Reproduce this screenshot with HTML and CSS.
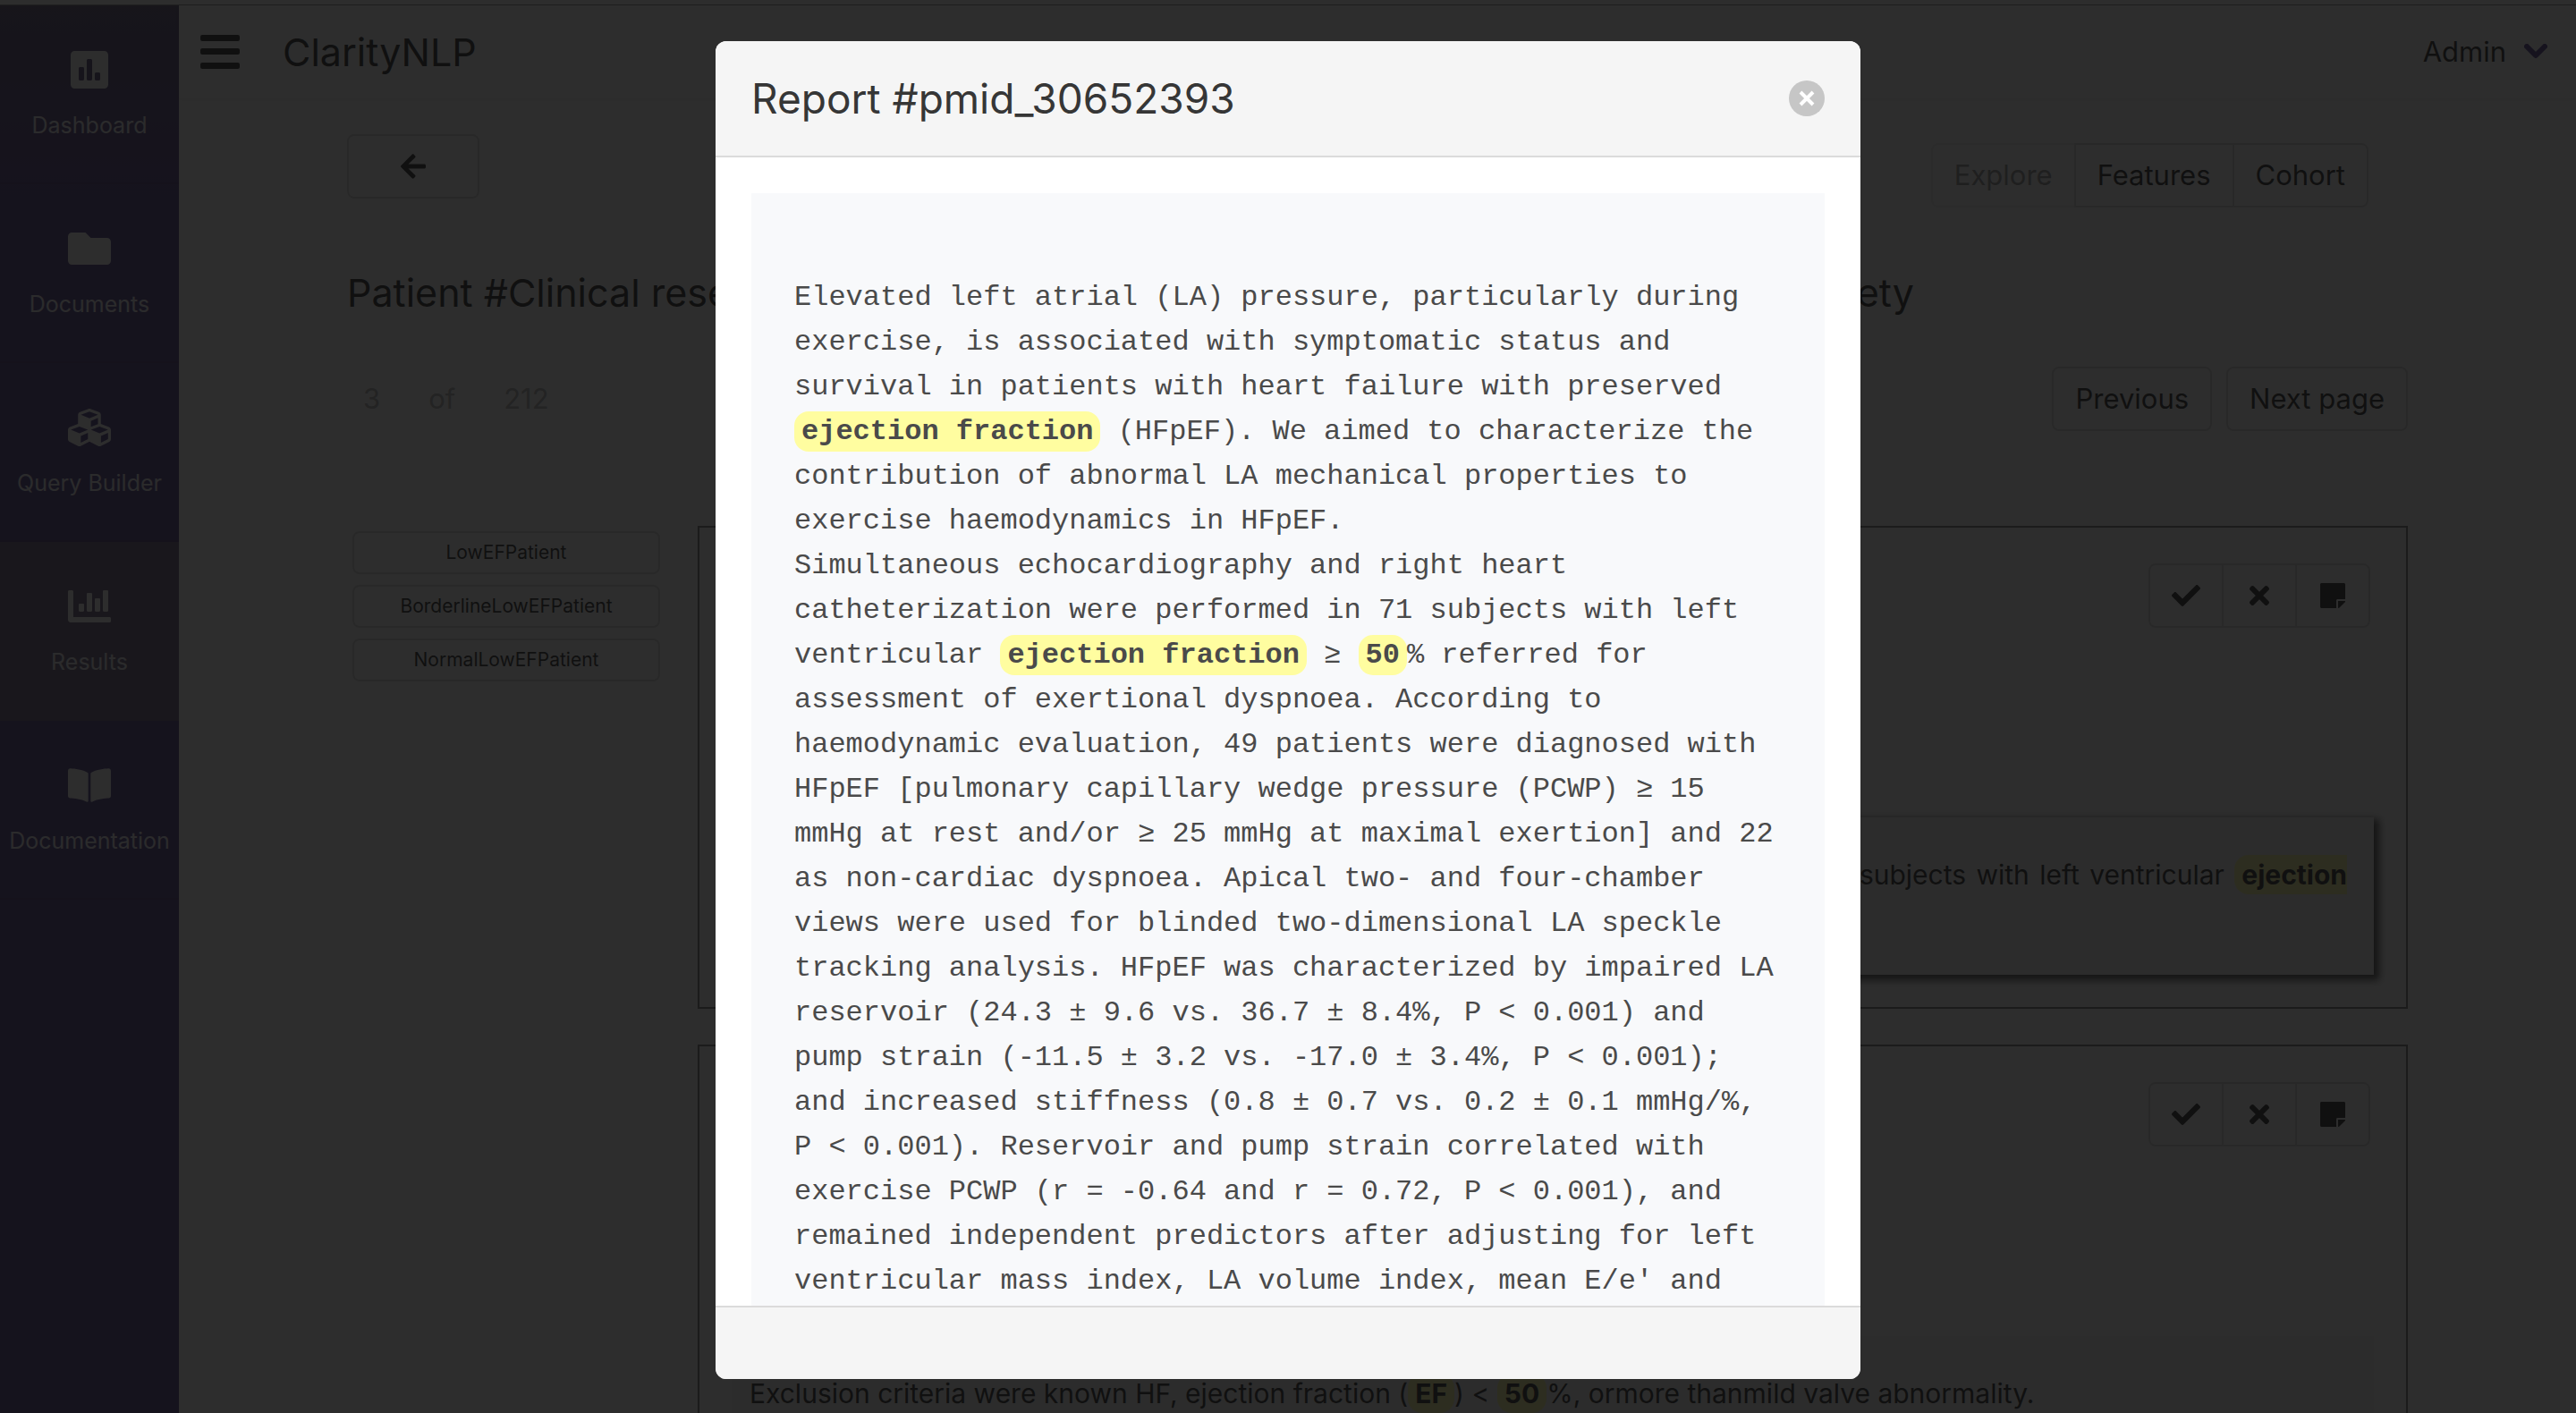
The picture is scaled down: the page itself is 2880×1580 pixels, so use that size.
FILE: index.html
```html
<!DOCTYPE html>
<html lang="en">
<head>
<meta charset="utf-8">
<title>ClarityNLP</title>
<link rel="stylesheet" href="styles.css">
</head>
<body>
<svg class="sprite" aria-hidden="true">
  <symbol id="i-check" viewBox="0 0 512 512"><path d="M173.898 439.404l-166.4-166.4c-9.997-9.997-9.997-26.206 0-36.204l36.203-36.204c9.997-9.998 26.207-9.998 36.204 0L192 312.69 432.095 72.596c9.997-9.997 26.207-9.997 36.204 0l36.203 36.204c9.997 9.997 9.997 26.206 0 36.204l-294.4 294.401c-9.998 9.997-26.207 9.997-36.204-.001z"/></symbol>
  <symbol id="i-times" viewBox="0 0 352 512"><path d="M242.72 256l100.07-100.07c12.28-12.28 12.28-32.19 0-44.48l-22.24-22.24c-12.28-12.28-32.19-12.28-44.48 0L176 189.28 75.93 89.21c-12.28-12.28-32.19-12.28-44.48 0L9.21 111.45c-12.28 12.28-12.28 32.19 0 44.48L109.28 256 9.21 356.07c-12.28 12.28-12.28 32.19 0 44.48l22.24 22.24c12.28 12.28 32.2 12.28 44.48 0L176 322.72l100.07 100.07c12.28 12.28 32.2 12.28 44.48 0l22.24-22.24c12.28-12.28 12.28-32.19 0-44.48L242.72 256z"/></symbol>
  <symbol id="i-note" viewBox="0 0 448 512"><path d="M312 320h136V56c0-13.3-10.7-24-24-24H24C10.7 32 0 42.7 0 56v400c0 13.3 10.7 24 24 24h264V344c0-13.2 10.8-24 24-24zm129 55l-98 98c-4.5 4.5-10.6 7-17 7h-6V352h128v6.1c0 6.3-2.5 12.4-7 16.9z"/></symbol>
</svg>

<div class="app">
  <div class="topline"></div>
  <div class="shell">
    <nav class="sidebar" aria-label="Main">
      <a class="side-item" href="#">
        <svg viewBox="0 0 448 512"><path d="M400 32H48C21.5 32 0 53.5 0 80v352c0 26.5 21.5 48 48 48h352c26.5 0 48-21.5 48-48V80c0-26.5-21.5-48-48-48zM160 368c0 8.84-7.16 16-16 16h-32c-8.84 0-16-7.16-16-16V240c0-8.84 7.16-16 16-16h32c8.84 0 16 7.16 16 16v128zm96 0c0 8.84-7.16 16-16 16h-32c-8.84 0-16-7.16-16-16V144c0-8.84 7.16-16 16-16h32c8.84 0 16 7.16 16 16v224zm96 0c0 8.84-7.16 16-16 16h-32c-8.84 0-16-7.16-16-16v-64c0-8.84 7.16-16 16-16h32c8.84 0 16 7.16 16 16v64z"/></svg>
        <span>Dashboard</span>
      </a>
      <a class="side-item" href="#">
        <svg viewBox="0 0 512 512"><path d="M464 128H272l-64-64H48C21.49 64 0 85.49 0 112v288c0 26.51 21.49 48 48 48h416c26.51 0 48-21.49 48-48V176c0-26.51-21.49-48-48-48z"/></svg>
        <span>Documents</span>
      </a>
      <a class="side-item" href="#">
        <svg viewBox="0 0 512 512"><path d="M488.6 250.2L392 214V105.5c0-15-9.3-28.4-23.4-33.7l-100-37.5c-8.1-3.1-17.1-3.1-25.3 0l-100 37.5c-14.1 5.3-23.4 18.7-23.4 33.7V214l-96.6 36.2C9.3 255.5 0 268.9 0 283.9V394c0 13.6 7.7 26.1 19.9 32.2l100 50c10.1 5.1 22.1 5.1 32.2 0l103.9-52 103.9 52c10.1 5.1 22.1 5.1 32.2 0l100-50c12.2-6.1 19.9-18.6 19.9-32.2V283.9c0-15-9.3-28.4-23.4-33.7zM358 214.8l-85 31.9v-68.2l85-37v73.3zM154 104.1l102-38.2 102 38.2v.6l-102 41.4-102-41.4v-.6zm84 291.1l-85 42.5v-79.1l85-38.8v75.4zm0-112l-102 41.4-102-41.4v-.6l102-38.2 102 38.2v.6zm240 112l-85 42.5v-79.1l85-38.8v75.4zm0-112l-102 41.4-102-41.4v-.6l102-38.2 102 38.2v.6z"/></svg>
        <span>Query Builder</span>
      </a>
      <a class="side-item is-active" href="#" aria-current="page">
        <svg viewBox="0 0 512 512"><path d="M332.8 320h38.4c6.4 0 12.8-6.4 12.8-12.8V172.8c0-6.4-6.4-12.8-12.8-12.8h-38.4c-6.4 0-12.8 6.4-12.8 12.8v134.4c0 6.4 6.4 12.8 12.8 12.8zm96 0h38.4c6.4 0 12.8-6.4 12.8-12.8V76.8c0-6.4-6.4-12.8-12.8-12.8h-38.4c-6.4 0-12.8 6.4-12.8 12.8v230.4c0 6.4 6.4 12.8 12.8 12.8zm-288 0h38.4c6.4 0 12.8-6.4 12.8-12.8v-70.4c0-6.4-6.4-12.8-12.8-12.8h-38.4c-6.4 0-12.8 6.4-12.8 12.8v70.4c0 6.4 6.4 12.8 12.8 12.8zm96 0h38.4c6.4 0 12.8-6.4 12.8-12.8V108.8c0-6.4-6.4-12.8-12.8-12.8h-38.4c-6.4 0-12.8 6.4-12.8 12.8v198.4c0 6.4 6.4 12.8 12.8 12.8zM496 384H64V80c0-8.84-7.16-16-16-16H16C7.16 64 0 71.16 0 80v336c0 17.67 14.33 32 32 32h464c8.84 0 16-7.16 16-16v-32c0-8.84-7.16-16-16-16z"/></svg>
        <span>Results</span>
      </a>
      <a class="side-item" href="#">
        <svg viewBox="0 0 576 512"><path d="M542.22 32.05c-54.8 3.11-163.72 14.43-230.96 55.59-4.64 2.84-7.27 7.89-7.27 13.17v363.87c0 11.55 12.63 18.85 23.28 13.49 69.18-34.82 169.23-44.32 218.7-46.92 16.89-.89 30.02-14.43 30.02-30.66V62.75c.01-17.71-15.35-31.74-33.77-30.7zM264.73 87.64C197.5 46.48 88.58 35.17 33.78 32.05 15.36 31.01 0 45.04 0 62.75V400.6c0 16.24 13.13 29.78 30.02 30.66 49.49 2.6 149.59 12.11 218.77 46.95 10.62 5.35 23.21-1.94 23.21-13.46V100.63c0-5.29-2.62-10.14-7.27-12.99z"/></svg>
        <span>Documentation</span>
      </a>
    </nav>

    <div class="content">
      <header class="navbar">
        <button class="burger" type="button" aria-label="Toggle menu">
          <svg viewBox="0 0 44 38"><rect width="44" height="7" rx="2"/><rect y="15" width="44" height="7" rx="2"/><rect y="31" width="44" height="7" rx="2"/></svg>
        </button>
        <a class="brand" href="#">ClarityNLP</a>
        <button class="account" type="button">Admin
          <svg viewBox="0 0 26 18"><path d="M3 3l10 10L23 3"/></svg>
        </button>
      </header>

      <main class="page">
        <div class="toolbar">
          <button class="btn btn-back" type="button" aria-label="Back">
            <svg viewBox="0 0 448 512"><path d="M257.5 445.1l-22.2 22.2c-9.4 9.4-24.6 9.4-33.9 0L7 273c-9.4-9.4-9.4-24.6 0-33.9L201.4 44.7c9.4-9.4 24.6-9.4 33.9 0l22.2 22.2c9.5 9.5 9.3 25-.4 34.3L136.6 216H424c13.3 0 24 10.7 24 24v32c0 13.3-10.7 24-24 24H136.6l120.5 114.8c9.8 9.3 10 24.8.4 34.3z"/></svg>
          </button>
          <div class="group views">
            <button class="btn" type="button" disabled>Explore</button>
            <button class="btn" type="button">Features</button>
            <button class="btn" type="button">Cohort</button>
          </div>
        </div>

        <h1 class="title">Patient #Clinical research in cardiology : official journal of the German Cardiac Society</h1>

        <div class="pager">
          <div class="pager-count"><span>3</span><span>of</span><span>212</span></div>
          <div class="pager-buttons">
            <button class="btn" type="button">Previous</button>
            <button class="btn" type="button">Next page</button>
          </div>
        </div>

        <div class="columns">
          <div class="filters">
            <button class="btn btn-small" type="button">LowEFPatient</button>
            <button class="btn btn-small" type="button">BorderlineLowEFPatient</button>
            <button class="btn btn-small" type="button">NormalLowEFPatient</button>
          </div>
          <div class="results">
            <article class="card">
              <div class="card-head">
                <div class="group">
                  <button class="btn btn-icon" type="button" aria-label="Accept"><svg><use href="#i-check"/></svg></button>
                  <button class="btn btn-icon" type="button" aria-label="Reject"><svg><use href="#i-times"/></svg></button>
                  <button class="btn btn-icon" type="button" aria-label="Add note"><svg><use href="#i-note"/></svg></button>
                </div>
              </div>
              <p class="excerpt is-hovered">Simultaneous echocardiography and right heart catheterization were performed in 71 subjects with left ventricular <mark>ejection fraction</mark> ≥ <mark>50</mark>% referred for assessment.</p>
            </article>
            <article class="card">
              <div class="card-head">
                <div class="group">
                  <button class="btn btn-icon" type="button" aria-label="Accept"><svg><use href="#i-check"/></svg></button>
                  <button class="btn btn-icon" type="button" aria-label="Reject"><svg><use href="#i-times"/></svg></button>
                  <button class="btn btn-icon" type="button" aria-label="Add note"><svg><use href="#i-note"/></svg></button>
                </div>
              </div>
              <p class="excerpt">Exclusion criteria were known HF, ejection fraction (<mark>EF</mark>) &lt; <mark>50</mark>%, ormore thanmild valve abnormality.</p>
            </article>
          </div>
        </div>
      </main>
    </div>
  </div>
</div>

<div class="modal">
  <section class="modal-card" role="dialog" aria-modal="true" aria-labelledby="report-title">
    <header class="modal-head">
      <h2 id="report-title">Report #pmid_30652393</h2>
      <button class="delete" type="button" aria-label="Close">
        <svg viewBox="0 0 40 40"><path d="M13 13l14 14M27 13L13 27"/></svg>
      </button>
    </header>
    <div class="modal-body">
<pre class="report">

Elevated left atrial (LA) pressure, particularly during exercise, is associated with symptomatic status and survival in patients with heart failure with preserved <mark>ejection fraction</mark> (HFpEF). We aimed to characterize the contribution of abnormal LA mechanical properties to exercise haemodynamics in HFpEF.
Simultaneous echocardiography and right heart catheterization were performed in 71 subjects with left ventricular <mark>ejection fraction</mark> ≥ <mark>50</mark>% referred for assessment of exertional dyspnoea. According to haemodynamic evaluation, 49 patients were diagnosed with HFpEF [pulmonary capillary wedge pressure (PCWP) ≥ 15 mmHg at rest and/or ≥ 25 mmHg at maximal exertion] and 22 as non-cardiac dyspnoea. Apical two- and four-chamber views were used for blinded two-dimensional LA speckle tracking analysis. HFpEF was characterized by impaired LA reservoir (24.3 ± 9.6 vs. 36.7 ± 8.4%, P &lt; 0.001) and pump strain (-11.5 ± 3.2 vs. -17.0 ± 3.4%, P &lt; 0.001); and increased stiffness (0.8 ± 0.7 vs. 0.2 ± 0.1 mmHg/%, P &lt; 0.001). Reservoir and pump strain correlated with exercise PCWP (r = -0.64 and r = 0.72, P &lt; 0.001), and remained independent predictors after adjusting for left ventricular mass index, LA volume index, mean E/e' and
</pre>
    </div>
    <footer class="modal-foot"></footer>
  </section>
</div>
</body>
</html>
```
FILE: styles.css
```css
* { box-sizing: border-box; }

html { overflow: hidden; }

body {
  margin: 0;
  background: #fff;
  color: #363636;
  font-family: Inter, "Liberation Sans", sans-serif;
  font-size: 31px;
  line-height: 48px;
}

button { font: inherit; color: inherit; cursor: pointer; }
a { color: inherit; text-decoration: none; }
svg { display: block; fill: currentColor; }
h1, h2, p, pre { margin: 0; font-weight: 400; }

.sprite { position: absolute; width: 0; height: 0; }

.app {
  display: flex;
  flex-direction: column;
  height: 100vh;
  overflow: hidden;
}

.topline { flex: none; height: 6px; border-bottom: 1px solid #999; }

.shell { display: flex; flex: 1; min-height: 0; }

/* Sidebar */
.sidebar {
  flex: none;
  width: 200px;
  background: linear-gradient(#61557c, #584690 240px);
}

.side-item {
  display: flex;
  flex-direction: column;
  align-items: center;
  gap: 20px;
  height: 200px;
  padding-top: 48px;
  border-bottom: 2px solid rgba(90, 40, 60, .15);
  color: #fff;
  font-size: 25px;
  line-height: 36px;
}

.side-item svg { width: 48px; height: 48px; }
.side-item span { opacity: .9; }
.side-item.is-active { background: rgba(140, 140, 130, .45); border-color: transparent; }

/* Top bar */
.content { flex: 1; min-width: 0; }

.navbar {
  display: flex;
  align-items: center;
  height: 104px;
  padding: 0 32px 0 24px;
  box-shadow: 0 2px 4px rgba(0, 0, 0, .06);
}

.burger, .account { padding: 0; border: 0; background: none; }
.burger svg { width: 44px; height: 38px; }

.brand { margin-left: 48px; font-size: 43px; }

.account { display: flex; align-items: center; gap: 20px; margin-left: auto; }

.account svg {
  width: 26px;
  height: 18px;
  fill: none;
  stroke: #5c4a96;
  stroke-width: 6;
  stroke-linecap: round;
  stroke-linejoin: round;
}

/* Page */
.page { max-width: 2304px; margin: 0 auto; padding-top: 40px; }

.toolbar { display: flex; align-items: flex-start; justify-content: space-between; }

.btn {
  display: flex;
  align-items: center;
  justify-content: center;
  height: 72px;
  padding: 0 24px;
  border: 2px solid #dbdbdb;
  border-radius: 8px;
  background: #fff;
}

.btn:disabled { opacity: .5; }
.btn-back { width: 148px; }
.btn-back svg { width: 28px; height: 32px; }

.btn-small { width: 100%; height: 48px; font-size: 21px; line-height: 32px; }

.btn-icon { width: 84px; }
.btn-icon svg { width: 32px; height: 32px; }

.group { display: flex; }
.group .btn + .btn { margin-left: -2px; }
.group .btn:not(:first-child) { border-top-left-radius: 0; border-bottom-left-radius: 0; }
.group .btn:not(:last-child) { border-top-right-radius: 0; border-bottom-right-radius: 0; }
.views { margin: 10px 44px 0 0; }

.title { margin-top: 68px; font-size: 43px; line-height: 54px; white-space: nowrap; }

.pager { display: flex; align-items: center; justify-content: space-between; margin-top: 56px; }
.pager-count { display: flex; gap: 54px; padding-left: 18px; color: #b5b5b5; }
.pager-buttons { display: flex; gap: 16px; }

.columns { display: flex; gap: 42px; margin-top: 106px; }

.filters {
  display: flex;
  flex: none;
  flex-direction: column;
  gap: 12px;
  width: 350px;
  padding: 6px 0 0 6px;
}

.results { display: flex; flex: 1; flex-direction: column; gap: 40px; min-width: 0; }

.card { padding: 40px 36px 36px; border: 2px solid #808080; }

.card-head {
  display: flex;
  align-items: flex-start;
  justify-content: flex-end;
  height: 284px;
  padding-right: 4px;
}

.excerpt {
  padding: 40px 30px 40px 20px;
  background: #f7f7f7;
  font-size: 30px;
  text-align: justify;
}

.excerpt.is-hovered { box-shadow: 4px 4px 8px 2px #555; }

mark {
  padding: 4px 8px;
  border-radius: 16px;
  background: #fffda0;
  color: inherit;
  font-weight: 700;
}

/* Report dialog */
.modal {
  position: fixed;
  inset: 0;
  display: flex;
  justify-content: center;
  padding: 46px 0 38px;
  background: rgba(10, 10, 10, .86);
}

.modal-card {
  display: flex;
  flex-direction: column;
  width: 1280px;
  max-width: 100%;
  overflow: hidden;
  border-radius: 12px;
  background: #fff;
}

.modal-head {
  display: flex;
  flex: none;
  align-items: center;
  justify-content: space-between;
  padding: 40px;
  border-bottom: 2px solid #dbdbdb;
  background: #f5f5f5;
}

.modal-head h2 { font-size: 46px; line-height: 48px; }

.delete {
  width: 40px;
  height: 40px;
  padding: 0;
  border: 0;
  border-radius: 50%;
  background: rgba(10, 10, 10, .2);
}

.delete svg { width: 40px; height: 40px; stroke: #fff; stroke-width: 4; }

.modal-body {
  flex: 1;
  min-height: 0;
  overflow-y: auto;
  padding: 40px;
  scrollbar-width: none;
}

.report {
  padding: 42px 48px 40px;
  background: #f8f9fb;
  color: #4a4a4a;
  font-family: "Liberation Mono", "Courier New", monospace;
  font-size: 32px;
  line-height: 50px;
  white-space: pre-wrap;
}

.modal-foot {
  flex: none;
  height: 82px;
  border-top: 2px solid #dbdbdb;
  background: #f5f5f5;
}
```
